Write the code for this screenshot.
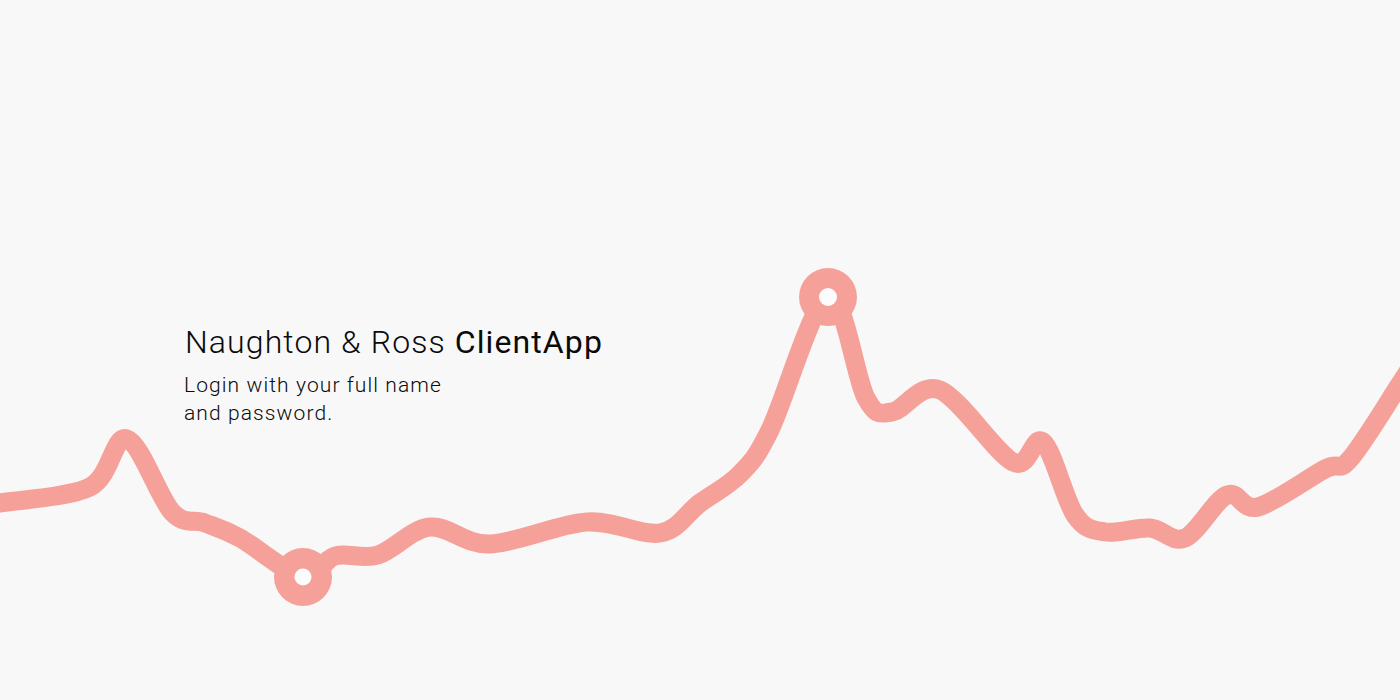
import React from 'react';

const points: [number, number][] = [
  [-10, 505], [0, 503], [90, 487], [127, 439], [172, 512], [205, 523], [240, 538],
  [303, 577], [335, 556], [378, 555], [430, 527], [490, 544], [587, 522],
  [660, 533], [700, 503], [740, 474], [770, 430], [828, 297], [866, 398],
  [892, 412], [940, 390], [1013, 462], [1043, 442], [1075, 515], [1105, 532],
  [1150, 528], [1185, 538], [1227, 495], [1258, 507], [1325, 469], [1350, 459],
  [1400, 384], [1420, 352],
];

// catmull-rom -> cubic bezier
function smoothPath(pts: [number, number][], t = 0.5) {
  let d = `M ${pts[0][0]} ${pts[0][1]}`;
  for (let i = 0; i < pts.length - 1; i++) {
    const p0 = pts[i - 1] || pts[i];
    const p1 = pts[i];
    const p2 = pts[i + 1];
    const p3 = pts[i + 2] || p2;
    const c1x = p1[0] + ((p2[0] - p0[0]) / 6) * t * 2;
    const c1y = p1[1] + ((p2[1] - p0[1]) / 6) * t * 2;
    const c2x = p2[0] - ((p3[0] - p1[0]) / 6) * t * 2;
    const c2y = p2[1] - ((p3[1] - p1[1]) / 6) * t * 2;
    d += ` C ${c1x} ${c1y}, ${c2x} ${c2y}, ${p2[0]} ${p2[1]}`;
  }
  return d;
}

export default function App() {
  return (
    <div className="relative w-full h-[700px] bg-[#f8f8f8] overflow-hidden" style={{ fontFamily: 'Roboto, "Noto Sans", sans-serif' }}>
      <svg className="absolute inset-0" width="1400" height="700" viewBox="0 0 1400 700">
        <path d={smoothPath(points)} fill="none" stroke="#f5a19a" strokeWidth="19" strokeLinecap="round" strokeLinejoin="round" />
        <circle cx="303" cy="577" r="29" fill="#f5a19a" />
        <circle cx="303" cy="577" r="8.5" fill="#fcfcfc" />
        <circle cx="828" cy="297" r="29" fill="#f5a19a" />
        <circle cx="828" cy="297" r="9" fill="#fcfcfc" />
      </svg>

      <div className="relative pt-[322px] pl-[185px]">
        <h1 className="text-[32px] leading-[40px] font-light text-[#0a0a0a] tracking-[1.1px]">
          Naughton &amp; Ross <span className="font-normal">ClientApp</span>
        </h1>
        <p className="mt-[9px] -ml-[1px] text-[21px] leading-[28px] font-light text-[#0a0a0a] tracking-[1.1px]">
          Login with your full name
          <br />
          and password.
        </p>
      </div>
    </div>
  );
}
